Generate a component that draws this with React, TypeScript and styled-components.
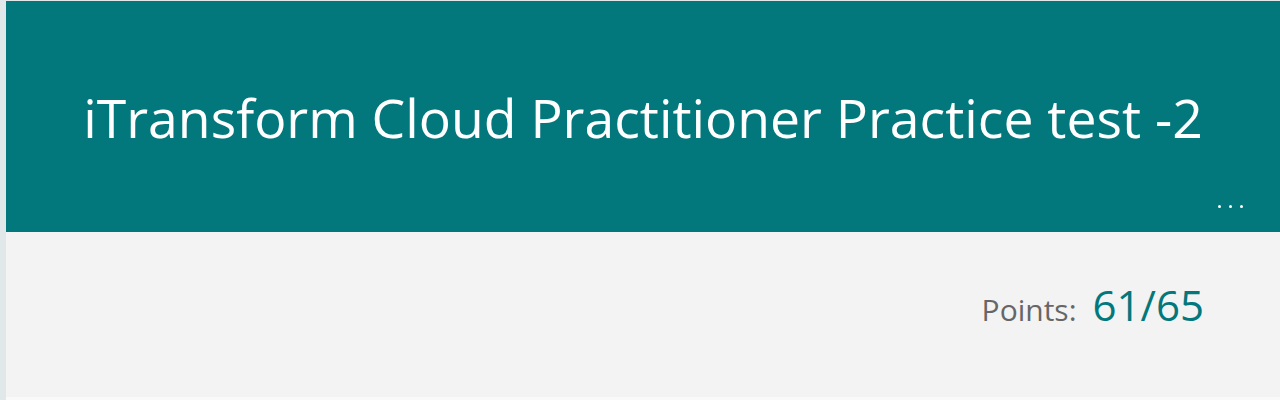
import React from "react";
import styled, { createGlobalStyle } from "styled-components";

const Global = createGlobalStyle`
  html, body { margin: 0; padding: 0; }
  body {
    background: #e1e8ea;
    font-family: "Open Sans", "Noto Sans", sans-serif;
    height: 400px;
    overflow: hidden;
  }
`;

const Page = styled.div`
  padding: 1px 0 0 6px;
`;

const Card = styled.main`
  display: flex;
  flex-direction: column;
  background: #f3f3f3;
  height: 396px;
  border-bottom: 3px solid #f9f9f9;
`;

const Header = styled.header`
  position: relative;
  height: 231px;
  background: #03787c;
  display: flex;
  flex-direction: column;
  align-items: center;
`;

const Title = styled.h1`
  margin: 0;
  padding-top: 86px;
  font-size: 53.5px;
  font-weight: 400;
  line-height: 62px;
  color: #ffffff;
  text-align: center;
  white-space: nowrap;
`;

const More = styled.button`
  position: absolute;
  right: 37px;
  top: 204px;
  display: flex;
  gap: 8px;
  padding: 0;
  border: 0;
  background: none;
`;

const Dot = styled.span`
  width: 3px;
  height: 3px;
  border-radius: 50%;
  background: #ffffff;
`;

const Score = styled.div`
  display: flex;
  justify-content: flex-end;
  align-items: baseline;
  gap: 16px;
  padding: 44px 76px 0 0;
`;

const Label = styled.span`
  font-size: 30px;
  color: #666666;
`;

const Value = styled.span`
  font-size: 42px;
  color: #03787c;
`;

export default function App() {
  return (
    <>
      <Global />
      <Page>
        <Card>
          <Header>
            <Title>iTransform Cloud Practitioner Practice test -2</Title>
            <More aria-label="More options">
              <Dot />
              <Dot />
              <Dot />
            </More>
          </Header>
          <Score>
            <Label>Points:</Label>
            <Value>61/65</Value>
          </Score>
        </Card>
      </Page>
    </>
  );
}
